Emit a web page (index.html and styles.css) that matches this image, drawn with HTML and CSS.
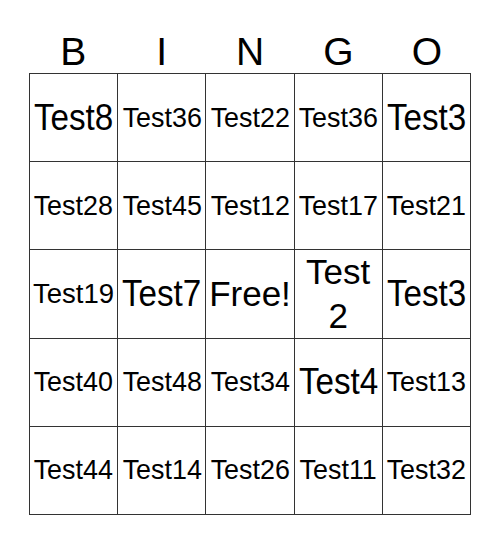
FILE: index.html
```html
<!DOCTYPE html>
<html>
<head>
<meta charset="utf-8">
<link rel="stylesheet" href="styles.css">
</head>
<body>
<div class="card">
  <div class="head">
    <span>B</span><span>I</span><span>N</span><span>G</span><span>O</span>
  </div>
  <div class="board">
    <div class="cell"><span class="t lg">Test8</span></div>
    <div class="cell"><span class="t">Test36</span></div>
    <div class="cell"><span class="t">Test22</span></div>
    <div class="cell"><span class="t">Test36</span></div>
    <div class="cell"><span class="t lg">Test3</span></div>

    <div class="cell"><span class="t">Test28</span></div>
    <div class="cell"><span class="t">Test45</span></div>
    <div class="cell"><span class="t">Test12</span></div>
    <div class="cell"><span class="t">Test17</span></div>
    <div class="cell"><span class="t">Test21</span></div>

    <div class="cell"><span class="t sm">Test19</span></div>
    <div class="cell"><span class="t lg">Test7</span></div>
    <div class="cell"><span class="t free">Free!</span></div>
    <div class="cell"><span class="t wrap">Test<br>2</span></div>
    <div class="cell"><span class="t lg">Test3</span></div>

    <div class="cell"><span class="t">Test40</span></div>
    <div class="cell"><span class="t">Test48</span></div>
    <div class="cell"><span class="t">Test34</span></div>
    <div class="cell"><span class="t lg">Test4</span></div>
    <div class="cell"><span class="t">Test13</span></div>

    <div class="cell"><span class="t">Test44</span></div>
    <div class="cell"><span class="t">Test14</span></div>
    <div class="cell"><span class="t">Test26</span></div>
    <div class="cell"><span class="t">Test11</span></div>
    <div class="cell"><span class="t">Test32</span></div>
  </div>
</div>
</body>
</html>
```

FILE: styles.css
```css
html, body {
  margin: 0;
  padding: 0;
  background: #fff;
}

body {
  font-family: "Liberation Sans", Arial, sans-serif;
  color: #000;
}

.card {
  width: 442px;
  margin: 0 auto;
  padding-top: 30px;
}

.head {
  display: grid;
  grid-template-columns: repeat(5, minmax(0, 1fr));
  height: 43px;
  font-size: 39px;
  line-height: 43px;
  text-align: center;
}

.board {
  display: grid;
  grid-template-columns: repeat(5, minmax(0, 1fr));
  grid-template-rows: repeat(5, 88.2px);
  border-left: 1px solid #333;
  border-top: 1px solid #333;
}

.cell {
  min-width: 0;
  border-right: 1px solid #333;
  border-bottom: 1px solid #333;
  display: flex;
  align-items: center;
  justify-content: center;
  white-space: nowrap;
}

.t {
  display: inline-block;
  flex: none;
  font-size: 28px;
  line-height: 1.15;
  transform: scaleX(0.96);
  text-align: center;
}

.t.lg {
  font-size: 36.5px;
  transform: scaleX(0.91);
}

.t.sm {
  font-size: 27.5px;
  transform: none;
}

.t.free {
  font-size: 35px;
  transform: none;
}

.t.wrap {
  font-size: 35px;
  line-height: 44px;
  transform: none;
  white-space: normal;
}
```
